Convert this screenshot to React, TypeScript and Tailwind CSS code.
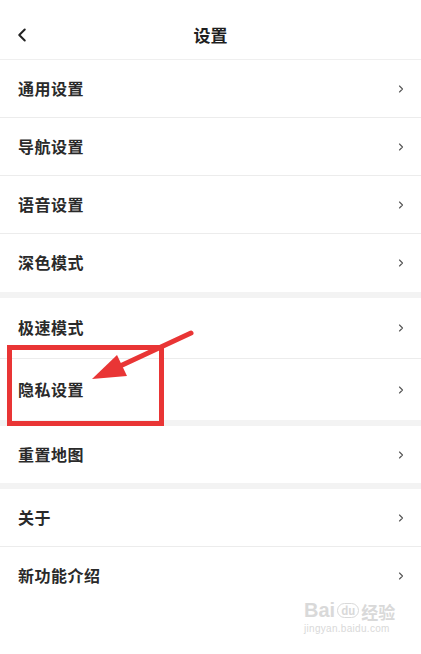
import { ChevronLeft, ChevronRight } from "lucide-react";

const groups: { rows: string[]; h: string }[] = [
  { rows: ["通用设置", "导航设置", "语音设置", "深色模式"], h: "h-[58px]" },
  { rows: ["极速模式", "隐私设置"], h: "h-[61px]" },
  { rows: ["重置地图"], h: "h-[57px]" },
  { rows: ["关于", "新功能介绍"], h: "h-[58px]" },
];

function Row({ label, h, last }: { label: string; h: string; last: boolean }) {
  return (
    <div className={`flex items-center justify-between pl-[18px] pr-[14px] ${h} ${last ? "" : "border-b border-[#ececec]"}`}>
      <span className="text-[16px] font-bold text-[#2a2a2a] tracking-[0.5px] -mt-[2px]">{label}</span>
      <ChevronRight size={12} strokeWidth={2.2} className="text-[#555]" />
    </div>
  );
}

export default function App() {
  return (
    <div
      className="relative w-[421px] h-[654px] bg-white overflow-hidden"
      style={{ fontFamily: '"Noto Sans CJK SC", "Noto Sans", sans-serif' }}
    >
      <div className="relative flex items-center justify-center h-[60px] border-b border-[#efefef]">
        <ChevronLeft size={22} strokeWidth={2.2} className="absolute left-[11px] top-[24px] text-[#222]" />
        <span className="text-[17px] font-bold text-[#1f1f1f] mt-[10px]">设置</span>
      </div>

      {groups.map((g, gi) => (
        <div key={gi} className={gi < groups.length - 1 ? "border-b-[6px] border-[#f3f3f3]" : ""}>
          {g.rows.map((r, ri) => (
            <Row key={r} label={r} h={g.h} last={ri === g.rows.length - 1} />
          ))}
        </div>
      ))}

      {/* annotation */}
      <div className="absolute left-[7px] top-[345px] w-[157px] h-[81px] border-[5px] border-[#e93535]" />
      <svg className="absolute left-0 top-0" width="421" height="654" viewBox="0 0 421 654">
        <line x1="191" y1="333" x2="118" y2="367" stroke="#e93535" strokeWidth="5" strokeLinecap="round" />
        <polygon points="92,379 117,355 127,376" fill="#e93535" />
      </svg>

      {/* watermark */}
      <div className="absolute left-[304px] top-[600px] flex flex-col items-start text-[#d9d9d9] leading-none">
        <div className="flex items-end gap-[2px]">
          <span className="text-[20px] font-bold" style={{ fontFamily: '"Liberation Sans", sans-serif' }}>Bai</span>
          <span className="text-[11px] font-bold rounded-full border border-[#d9d9d9] px-[3px] py-[1px] mb-[2px]">du</span>
          <span className="text-[17px] font-bold">经验</span>
        </div>
        <span className="text-[10px] mt-[4px] tracking-[0.3px]" style={{ fontFamily: '"Liberation Sans", sans-serif' }}>jingyan.baidu.com</span>
      </div>
    </div>
  );
}
